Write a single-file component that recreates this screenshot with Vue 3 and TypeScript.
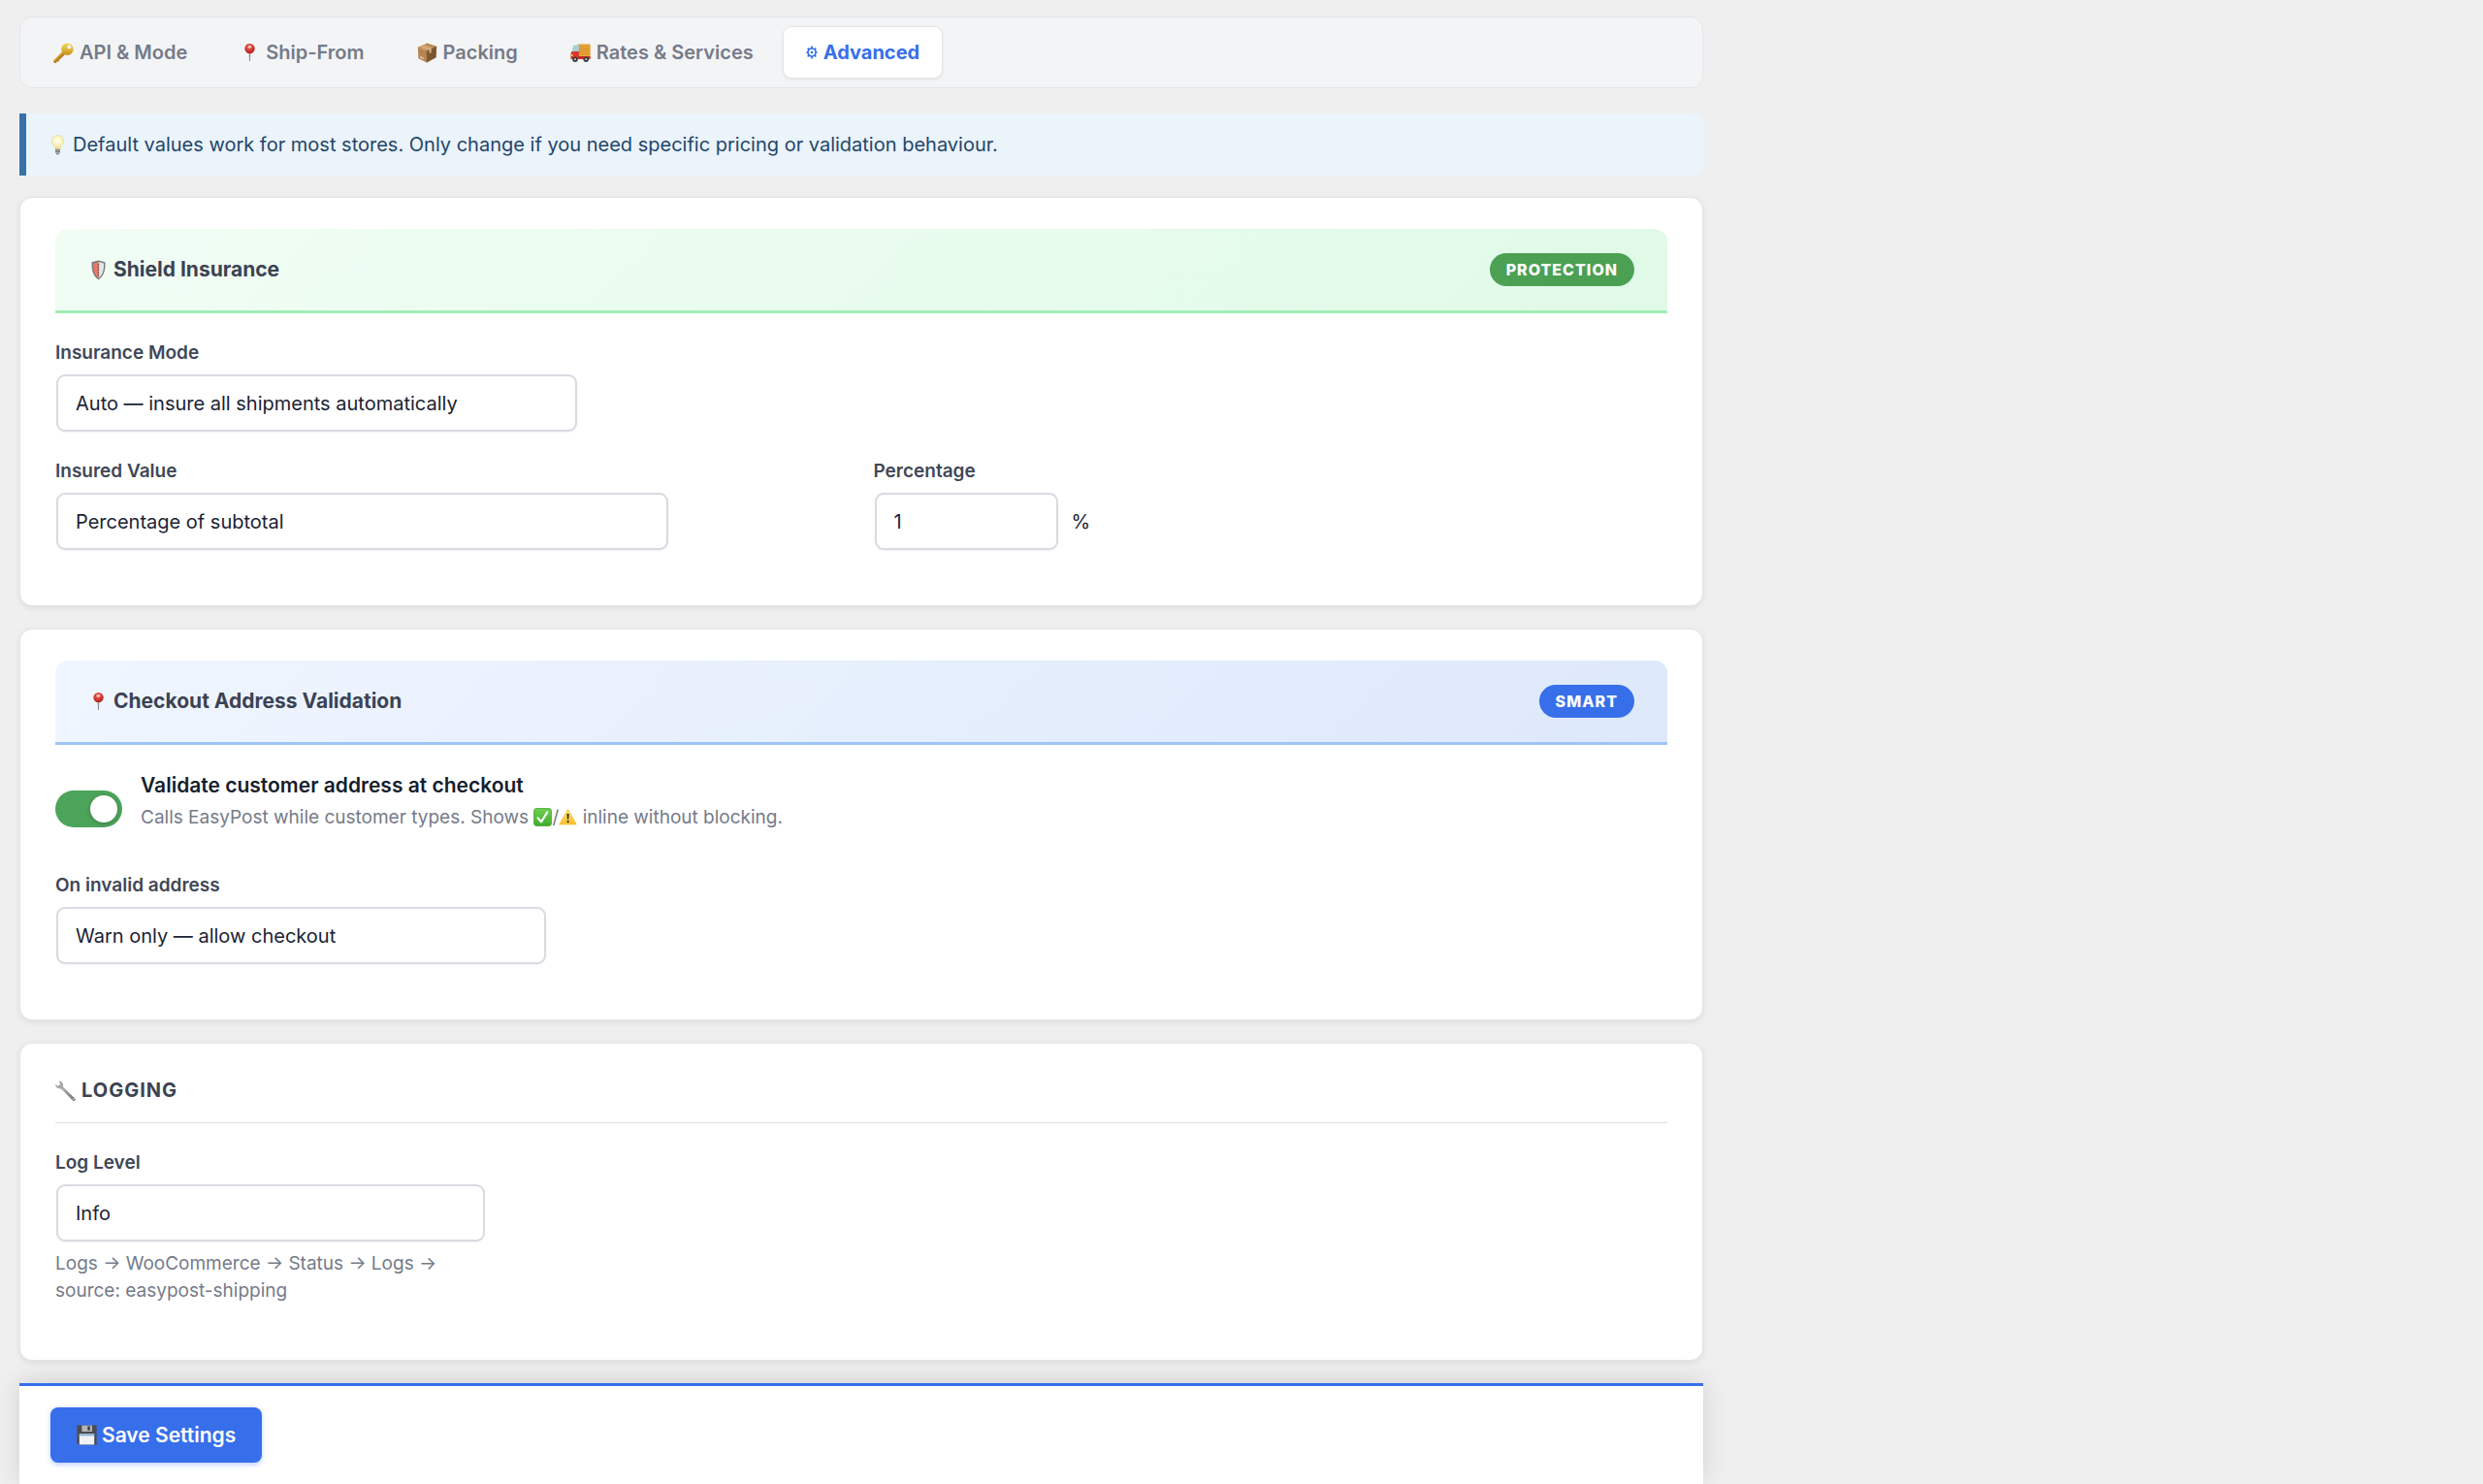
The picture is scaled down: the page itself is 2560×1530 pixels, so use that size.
<script setup lang="ts">
import { ref } from 'vue'

interface Tab {
  id: string
  label: string
  icon: string
}

const tabs: Tab[] = [
  { id: 'api', label: 'API & Mode', icon: 'key' },
  { id: 'ship', label: 'Ship-From', icon: 'pin' },
  { id: 'packing', label: 'Packing', icon: 'box' },
  { id: 'rates', label: 'Rates & Services', icon: 'truck' },
  { id: 'advanced', label: 'Advanced', icon: 'gear' },
]

const activeTab = ref('advanced')
const insuranceMode = ref('auto')
const insuredValue = ref('percentage')
const percentage = ref('1')
const validateAddress = ref(true)
const invalidAction = ref('warn')
const logLevel = ref('info')
</script>

<template>
  <svg class="symbols" aria-hidden="true">
    <defs>
      <linearGradient id="gold" x1="0" y1="0" x2="0" y2="1">
        <stop offset="0" stop-color="#f6dc5c" />
        <stop offset="1" stop-color="#c8901c" />
      </linearGradient>
      <radialGradient id="red-ball" cx="0.45" cy="0.35" r="0.6">
        <stop offset="0" stop-color="#f9a8a0" />
        <stop offset="0.4" stop-color="#e0463c" />
        <stop offset="1" stop-color="#b3231f" />
      </radialGradient>
      <radialGradient id="glow" cx="0.5" cy="0.45" r="0.55">
        <stop offset="0" stop-color="#fffef2" />
        <stop offset="0.6" stop-color="#fdf7c6" />
        <stop offset="1" stop-color="#efdf92" />
      </radialGradient>
      <linearGradient id="leaf" x1="0" y1="0" x2="0" y2="1">
        <stop offset="0" stop-color="#6fd04f" />
        <stop offset="1" stop-color="#3fae2c" />
      </linearGradient>
      <linearGradient id="amber" x1="0" y1="0" x2="0" y2="1">
        <stop offset="0" stop-color="#ffe27a" />
        <stop offset="1" stop-color="#f7bf2e" />
      </linearGradient>
      <linearGradient id="steel" x1="0" y1="0" x2="1" y2="1">
        <stop offset="0" stop-color="#b9bcc0" />
        <stop offset="1" stop-color="#6c6f74" />
      </linearGradient>
    </defs>
    <symbol id="icon-key" viewBox="0 0 21 21">
      <path d="M9 9.5 12 12.3 5.8 18.2 5.8 19.4 3.6 19.8 2.9 20.9 0.6 20.9 0.3 18.4Z" fill="#b9822a" />
      <path d="M9 9.6 10 10.5 1.2 18.8 0.4 18.2Z" fill="#e0ae3c" />
      <path fill-rule="evenodd" d="M14.4 0.4a6.3 6.3 0 1 0 0.1 12.6 6.3 6.3 0 0 0-0.1-12.6ZM16.4 2.4a2 2 0 1 1 0 4 2 2 0 0 1 0-4Z" fill="url(#gold)" />
    </symbol>
    <symbol id="icon-pin" viewBox="0 0 21 21">
      <path d="M9.7 10h1.6l-0.3 8.6-0.5 0.9-0.5-0.9Z" fill="#8f8f94" />
      <circle cx="10.5" cy="6.1" r="5.2" fill="url(#red-ball)" />
      <ellipse cx="10.6" cy="4.2" rx="1.8" ry="1.3" fill="#ffd9d4" opacity="0.8" />
    </symbol>
    <symbol id="icon-box" viewBox="0 0 21 21">
      <path d="M0.8 4.4 10.3 0.4 20.2 3.6 10 8.2Z" fill="#c99a63" />
      <path d="M0.8 4.4 10 8.2 10 20.6 1.4 16.2Z" fill="#b58450" />
      <path d="M10 8.2 20.2 3.6 19.7 15.2 10 20.6Z" fill="#7f552f" />
      <path d="M4.4 2.9 14.6 6.2 14.6 10.2 12.8 11 12.6 7.1 3.2 3.4Z" fill="#dcb988" />
      <path d="M9 1 18 4.6M10 8.2V20.6" stroke="#96693d" stroke-width="0.7" fill="none" />
      <path d="M3.2 13.8 6.6 15.5V17.2L3.2 15.4Z" fill="#e7d2b4" />
    </symbol>
    <symbol id="icon-truck" viewBox="0 0 21 21">
      <path d="M7.6 1.4H20.6V16H7.6Z" fill="#e9a63a" />
      <path d="M7.6 4h13M7.6 6.6h13M7.6 9.2h13M7.6 11.8h13" stroke="#c98423" stroke-width="0.7" />
      <path d="M3.2 2.8 8.8 2V9.6H1.4Z" fill="#a9cfd6" />
      <path d="M1.4 9H9V17H0.4V11.4Z" fill="#d8392e" />
      <path d="M8.4 14H20.6V17H8.4Z" fill="#c42d25" />
      <path d="M0.6 12.2h2v1.4h-2Z" fill="#ffe9a5" />
      <circle cx="5" cy="17.2" r="2.7" fill="#36383d" />
      <circle cx="16.2" cy="17.2" r="2.7" fill="#36383d" />
      <circle cx="5" cy="17.2" r="1.1" fill="#b9bcc2" />
      <circle cx="16.2" cy="17.2" r="1.1" fill="#b9bcc2" />
    </symbol>
    <symbol id="icon-gear" viewBox="0 0 12 14">
      <circle cx="6" cy="7" r="4" fill="none" stroke="currentColor" stroke-width="1.7" />
      <circle cx="6" cy="7" r="1.3" fill="currentColor" />
      <path d="M6 0.6V3M6 11v2.4M0.4 7H2M10 7h1.6M1.7 2.6 3.2 4.2M8.8 9.8l1.5 1.6M10.3 2.6 8.8 4.2M3.2 9.8 1.7 11.4" stroke="currentColor" stroke-width="1.7" />
    </symbol>
    <symbol id="icon-bulb" viewBox="0 0 21 21">
      <path d="M10.5 0.5a6 6 0 0 0-6 6c0 3.4 2.8 4.6 3.4 8.1h5.2c0.6-3.5 3.4-4.7 3.4-8.1a6 6 0 0 0-6-6Z" fill="url(#glow)" stroke="#ecd98a" stroke-width="0.6" />
      <path d="M8.6 8.4 9.6 14.4M12.4 8.4 11.4 14.4" stroke="#e3cb7a" stroke-width="0.6" fill="none" />
      <path d="M8 14.4h5v3.8l-1.4 2h-2.2L8 18.2Z" fill="#b4b4b4" />
      <path d="M8 15.8h5M8 17.4h5M9.2 19.7h2.6" stroke="#6f6f6f" stroke-width="0.9" />
    </symbol>
    <symbol id="icon-shield" viewBox="0 0 21 21">
      <path d="M10.5 0.6 17.4 2.3C17.8 10 16.4 16.4 10.5 20.4 4.6 16.4 3.2 10 3.6 2.3Z" fill="#77797d" />
      <path d="M10.5 2 16.1 3.4C16.3 9.8 15.2 15.2 10.5 18.8Z" fill="#e3e5e7" />
      <path d="M10.5 2 4.9 3.4C4.7 9.8 5.8 15.2 10.5 18.8Z" fill="#e37864" />
      <path d="M10.5 4v14" stroke="#7c4640" stroke-width="1.3" stroke-dasharray="1.6 1.2" />
    </symbol>
    <symbol id="icon-check" viewBox="0 0 20 20">
      <rect x="0.6" y="0.6" width="18.8" height="18.8" rx="2.6" fill="url(#leaf)" stroke="#3a9c2b" stroke-width="0.8" />
      <path d="M4.8 10.8 8.4 15.2 15 4.6" fill="none" stroke="#fff" stroke-width="2.2" stroke-linecap="round" stroke-linejoin="round" />
    </symbol>
    <symbol id="icon-warning" viewBox="0 0 20 20">
      <path d="M10 1.6 19.2 17.8H0.8Z" fill="url(#amber)" stroke="#f5c544" stroke-width="1" stroke-linejoin="round" />
      <path d="M9 6.2h2.2l-0.5 6.2H9.5Z" fill="#2b2616" />
      <circle cx="10.1" cy="14.8" r="1.2" fill="#2b2616" />
    </symbol>
    <symbol id="icon-wrench" viewBox="0 0 21 21">
      <path d="M7 5.4 20.2 18.4a1.6 1.6 0 0 1-2.4 2.2L5 7.4Z" fill="url(#steel)" />
      <path d="M3.6 0.4C6.6 0.2 8.6 2.4 7.9 5.4L8.2 7.4 6.4 8.9 4.8 8.2C2 8.6 0 6.6 0.3 4L3 5.7 5.3 3.6Z" fill="#a5a8ac" />
      <circle cx="18.7" cy="19.2" r="0.7" fill="#e8e8ea" />
    </symbol>
    <symbol id="icon-disk" viewBox="0 0 21 21">
      <path d="M0.4 0.6H20.6V20.4H2L0.4 18.8Z" fill="#4a4b4f" />
      <path d="M5.4 0.6H16V7H5.4Z" fill="#b3b5b8" />
      <path d="M11.4 1.4H13.8V5.8H11.4Z" fill="#3f4043" />
      <path d="M2.8 9.2H18.2V20.4H2.8Z" fill="#f0f1f2" />
      <path d="M2.8 9.2H18.2V11.4H2.8Z" fill="#8db4d8" />
    </symbol>
  </svg>

  <main class="settings">
    <nav class="tabs" aria-label="Settings sections">
      <button
        v-for="tab in tabs"
        :key="tab.id"
        type="button"
        class="tab"
        :class="{ active: tab.id === activeTab }"
        @click="activeTab = tab.id"
      >
        <svg class="emoji" :class="{ slim: tab.icon === 'gear' }" aria-hidden="true"><use :href="'#icon-' + tab.icon" /></svg>
        <span>{{ tab.label }}</span>
      </button>
    </nav>

    <p class="notice">
      <svg class="emoji" aria-hidden="true"><use href="#icon-bulb" /></svg>
      <span>Default values work for most stores. Only change if you need specific pricing or validation behaviour.</span>
    </p>

    <section class="card">
      <header class="banner green">
        <h2>
          <svg class="emoji" aria-hidden="true"><use href="#icon-shield" /></svg>
          <span>Shield Insurance</span>
        </h2>
        <span class="badge">PROTECTION</span>
      </header>
      <div class="field">
        <label for="insurance-mode">Insurance Mode</label>
        <select id="insurance-mode" v-model="insuranceMode" class="control mode">
          <option value="auto">Auto — insure all shipments automatically</option>
        </select>
      </div>
      <div class="columns">
        <div class="field">
          <label for="insured-value">Insured Value</label>
          <select id="insured-value" v-model="insuredValue" class="control value">
            <option value="percentage">Percentage of subtotal</option>
          </select>
        </div>
        <div class="field">
          <label for="percentage">Percentage</label>
          <div class="with-unit">
            <input id="percentage" v-model="percentage" type="text" inputmode="decimal" class="control percent" />
            <span>%</span>
          </div>
        </div>
      </div>
    </section>

    <section class="card">
      <header class="banner blue">
        <h2>
          <svg class="emoji" aria-hidden="true"><use href="#icon-pin" /></svg>
          <span>Checkout Address Validation</span>
        </h2>
        <span class="badge">SMART</span>
      </header>
      <div class="toggle-row">
        <input id="validate" v-model="validateAddress" type="checkbox" role="switch" class="switch" />
        <div>
          <label for="validate">Validate customer address at checkout</label>
          <p>
            Calls EasyPost while customer types. Shows <svg class="emoji inline" aria-hidden="true"><use href="#icon-check" /></svg>/<svg class="emoji inline" aria-hidden="true"><use href="#icon-warning" /></svg> inline without blocking.
          </p>
        </div>
      </div>
      <div class="field">
        <label for="invalid-action">On invalid address</label>
        <select id="invalid-action" v-model="invalidAction" class="control action">
          <option value="warn">Warn only — allow checkout</option>
        </select>
      </div>
    </section>

    <section class="card">
      <h2 class="plain-title">
        <svg class="emoji" aria-hidden="true"><use href="#icon-wrench" /></svg>
        <span>LOGGING</span>
      </h2>
      <div class="field narrow">
        <label for="log-level">Log Level</label>
        <select id="log-level" v-model="logLevel" class="control">
          <option value="info">Info</option>
        </select>
        <p class="help">Logs → WooCommerce → Status → Logs → source: easypost-shipping</p>
      </div>
    </section>

    <footer class="save-bar">
      <button type="button" class="save">
        <svg class="emoji" aria-hidden="true"><use href="#icon-disk" /></svg>
        <span>Save Settings</span>
      </button>
    </footer>
  </main>
</template>

<style>
body {
  margin: 0;
  background: #efefef;
}
</style>

<style scoped>
.symbols {
  position: absolute;
  width: 0;
  height: 0;
}

.settings {
  box-sizing: border-box;
  max-width: 1776px;
  padding: 17px 20px 0;
  font-family: Inter, "Liberation Sans", sans-serif;
  font-size: 20px;
  line-height: 28px;
  color: #1b2333;
}

.emoji {
  flex: none;
  width: 21px;
  height: 21px;
}

.emoji.slim {
  width: 12px;
  height: 14px;
}

.emoji.inline {
  width: 19px;
  height: 19px;
  vertical-align: -3px;
}

.tabs {
  display: flex;
  gap: 6px;
  padding: 9px 10px;
  margin-bottom: 26px;
  background: #f3f4f6;
  border: 1px solid #e4e5ea;
  border-radius: 13px;
}

.tab {
  display: flex;
  align-items: center;
  gap: 6px;
  height: 54px;
  padding: 0 23px;
  font: inherit;
  font-weight: 600;
  color: #757b88;
  background: none;
  border: 1px solid transparent;
  border-radius: 9px;
}

.tab.active {
  font-weight: 700;
  color: #376fea;
  background: #fff;
  border-color: #e4e5ea;
  box-shadow: 0 1px 3px rgba(0, 0, 0, 0.08);
}

.notice {
  display: flex;
  align-items: center;
  gap: 5px;
  padding: 18px 22px;
  margin: 0 0 22px;
  color: #22466a;
  background: #ebf3fb;
  border-left: 7px solid #3672a8;
  border-radius: 0 9px 9px 0;
}

.card {
  padding: 32px 36px 29px;
  margin-bottom: 23px;
  background: #fff;
  border: 1px solid #e4e5ea;
  border-radius: 13px;
  box-shadow: 0 2px 6px rgba(0, 0, 0, 0.08);
}

.banner {
  display: flex;
  align-items: center;
  justify-content: space-between;
  padding: 25px 34px;
  margin-bottom: 28px;
  border-bottom: 3px solid;
  border-radius: 13px 13px 0 0;
}

.banner.green {
  background: linear-gradient(135deg, #f1fdf5, #e0fae7);
  border-color: #a0edb4;
}

.banner.blue {
  background: linear-gradient(135deg, #f0f6ff, #dde8fb);
  border-color: #9fc5f8;
}

.banner h2,
.plain-title {
  display: flex;
  align-items: center;
  margin: 0;
  font-weight: 700;
  color: #3b4353;
}

.banner h2 {
  gap: 5px;
  font-size: 21px;
  line-height: 34px;
}

.badge {
  padding: 0 17px;
  font-size: 16px;
  font-weight: 800;
  line-height: 34px;
  letter-spacing: 1px;
  color: #fff;
  border-radius: 17px;
}

.green .badge {
  background: #4ca054;
}

.blue .badge {
  background: #376fea;
}

.field {
  margin-bottom: 28px;
}

.field label {
  display: block;
  margin-bottom: 9px;
  font-size: 19px;
  font-weight: 600;
  line-height: 26px;
  color: #3f4757;
}

.narrow {
  max-width: 444px;
}

.columns {
  display: grid;
  grid-template-columns: 1fr 1fr;
  gap: 25px;
}

.control {
  display: block;
  box-sizing: border-box;
  width: calc(100% - 2px);
  height: 59px;
  padding: 0 18px;
  margin: 0 1px;
  font: inherit;
  color: #1b2333;
  appearance: none;
  background: #fff;
  border: 2px solid #d9dbe2;
  border-radius: 9px;
  box-shadow: 0 1px 2px rgba(0, 0, 0, 0.06);
}

.mode {
  max-width: 537px;
}

.value {
  max-width: 631px;
}

.action {
  max-width: 505px;
}

.percent {
  max-width: 189px;
}

.with-unit {
  display: flex;
  align-items: center;
  gap: 13px;
}

.toggle-row {
  display: flex;
  align-items: center;
  gap: 19px;
  margin-bottom: 28px;
}

.toggle-row label {
  display: block;
  font-size: 21px;
  font-weight: 600;
  color: #161d2b;
}

.toggle-row p {
  margin: 5px 0 15px;
  font-size: 19px;
  color: #757b89;
}

.switch {
  box-sizing: border-box;
  flex: none;
  width: 69px;
  height: 38px;
  padding: 5px;
  margin: 0;
  appearance: none;
  background: #4ca45a;
  border-radius: 19px;
}

.switch::before {
  display: block;
  width: 28px;
  height: 28px;
  content: "";
  background: #fff;
  border-radius: 50%;
  box-shadow: 0 1px 4px rgba(0, 0, 0, 0.25);
}

.switch:checked::before {
  margin-left: auto;
}

.plain-title {
  gap: 6px;
  padding-bottom: 17px;
  margin-bottom: 28px;
  font-size: 20px;
  line-height: 32px;
  letter-spacing: 1px;
  border-bottom: 1px solid #dfe1e6;
}

.help {
  margin: 9px 0 0;
  font-size: 19px;
  color: #757b89;
}

.save-bar {
  padding: 22px 32px;
  background: #fff;
  border-top: 3px solid #376fea;
  box-shadow: 0 -2px 24px rgba(0, 0, 0, 0.12);
}

.save {
  display: flex;
  align-items: center;
  gap: 5px;
  height: 57px;
  padding: 0 27px;
  font: inherit;
  font-size: 21px;
  font-weight: 600;
  color: #fff;
  background: #376fea;
  border: 0;
  border-radius: 8px;
  box-shadow: 0 2px 5px rgba(55, 111, 234, 0.35);
}
</style>
